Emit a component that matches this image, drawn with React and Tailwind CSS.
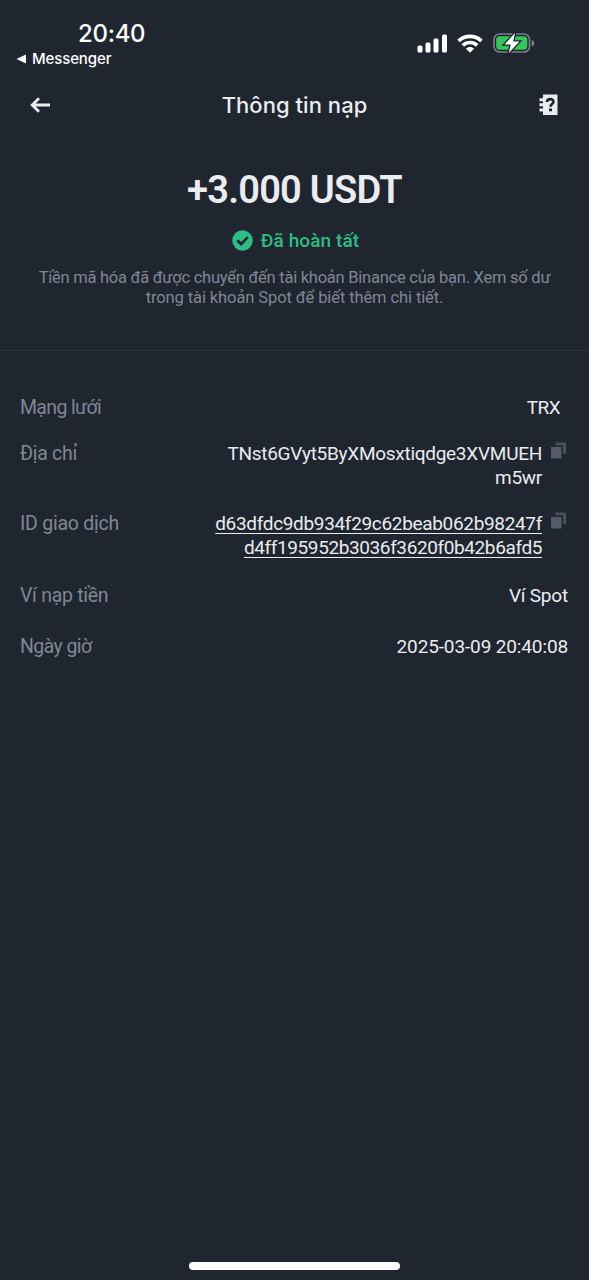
import React from "react";

const SignalIcon = () => (
  <svg width="30" height="19" viewBox="0 0 30 19" fill="#fff">
    <rect x="0.5" y="11.5" width="5" height="7" rx="1.5" />
    <rect x="8.5" y="8.5" width="5" height="10" rx="1.5" />
    <rect x="16.5" y="4.5" width="5" height="14" rx="1.5" />
    <rect x="25" y="0.5" width="5" height="18" rx="1.5" />
  </svg>
);

const WifiIcon = () => (
  <svg width="26" height="19" viewBox="0 0 26 19" fill="none" stroke="#fff" strokeWidth="3.7">
    <path d="M1.600 7C8 .9 18 .9 24.400 7" />
    <path d="M5.800 11.400c4.100-3.900 10.300-3.900 14.400 0" />
    <path d="M13 18.800 8.900 14.700c2.200-2.200 6-2.200 8.200 0z" fill="#fff" stroke="none" />
  </svg>
);

const BatteryIcon = () => (
  <svg width="42" height="22" viewBox="0 0 42 22">
    <rect x="1" y="2" width="35.500" height="18" rx="5.500" fill="none" stroke="#7b8087" strokeWidth="1.600" />
    <rect x="3.200" y="4.200" width="31.100" height="13.600" rx="3.600" fill="#32c759" />
    <path d="M38.700 8v6.500c1.900-.6 2.600-1.800 2.600-3.250S40.600 8.600 38.700 8z" fill="#7b8087" />
    <path d="M22 1 11.500 12.400h6.200L15.800 21 26.400 9.600h-6.200z" fill="#fff" stroke="#202630" strokeWidth="2.600" paintOrder="stroke" />
  </svg>
);

const BackIcon = () => (
  <svg width="22" height="16" viewBox="0 0 22 16" fill="none" stroke="#eaecef" strokeWidth="2.800">
    <path d="M20 8H2.500M9 1.200 2.200 8 9 14.800" />
  </svg>
);

const GuideIcon = () => (
  <svg width="19" height="22" viewBox="0 0 19 22">
    <path d="M4 0.500h14.500v20.500H4v-3.500H.5v-3H4v-2.200H.5v-3H4V7.200H.5v-3H4z" fill="#eaecef" />
    <path d="M8 8C8 6 9.300 5.100 11.200 5.100s3.200 1 3.200 2.700c0 2.300-2.900 2.200-2.900 5" fill="none" stroke="#202630" strokeWidth="2.600" />
    <rect x="10" y="14.500" width="3" height="2.800" fill="#202630" />
  </svg>
);

const CheckIcon = () => (
  <svg width="21" height="21" viewBox="0 0 21 21">
    <circle cx="10.500" cy="10.500" r="10.200" fill="#2ebd85" />
    <path d="m5.300 10.200 3.800 3.800 6.800-6.900" fill="none" stroke="#202630" strokeWidth="2.700" />
  </svg>
);

const CopyIcon = () => (
  <svg className="shrink-0" width="15" height="17" viewBox="0 0 15 17">
    <rect x="0" y="5" width="10.500" height="11.500" fill="#535b69" />
    <path d="M4.500.500H15v11.500h-2.800V3.300H4.500z" fill="#4a515b" />
  </svg>
);

const Label = ({ children, className }) => (
  <span className={`whitespace-nowrap text-[19.5px] text-[#7f8793] ${className}`}>{children}</span>
);

export default function App() {
  return (
    <div className="flex h-[1280px] w-full flex-col bg-[#202630] font-[Roboto,sans-serif] text-[#eaecef]">
      <div className="flex h-[76px] justify-between pl-4 pr-[54px] pt-[20px] font-[Inter,sans-serif] text-white">
        <div className="flex flex-col">
          <span className="pl-[62px] text-[24px] font-medium leading-7 tracking-[-0.3px]">20:40</span>
          <div className="flex h-[22px] items-center gap-[6px]">
            <svg width="10" height="10" viewBox="0 0 10 10" fill="#fff"><path d="M.500 5 10 .500v9z" /></svg>
            <span className="text-[15px] font-medium leading-5 tracking-[-0.12px]">Messenger</span>
          </div>
        </div>
        <div className="flex h-[46px] items-center gap-[10px]">
          <SignalIcon />
          <WifiIcon />
          <BatteryIcon />
        </div>
      </div>

      <header className="flex h-[57px] items-center justify-between pl-[30px] pr-[31px]">
        <BackIcon />
        <h1 className="pr-[2px] pt-px font-[Inter,sans-serif] text-[22px] font-medium tracking-[0.05px]">Thông tin nạp</h1>
        <GuideIcon />
      </header>

      <section className="flex h-[218px] flex-col items-center border-b border-[#2d343f] pt-[34px]">
        <div className="h-[46px] whitespace-nowrap text-[38px] font-semibold leading-[46px] tracking-[-0.75px]">+3.000 USDT</div>
        <div className="mt-[15px] flex h-6 items-center gap-2 pl-[2px] text-[#2ebd85]">
          <CheckIcon />
          <span className="pt-[2px] text-[19px] font-medium tracking-[0.08px]">Đã hoàn tất</span>
        </div>
        <p className="mt-[16px] whitespace-nowrap text-center text-[16.5px] leading-[20px] text-[#7f8793]">
          <span className="tracking-[-0.25px]">Tiền mã hóa đã được chuyển đến tài khoản Binance của bạn. Xem số dư</span>
          <br />
          <span className="tracking-[-0.1px]">trong tài khoản Spot để biết thêm chi tiết.</span>
        </p>
      </section>

      <section className="flex flex-col pl-5 pr-[21px] pt-[45px] text-[19px] leading-6">
        <div className="flex h-[46px] justify-between">
          <Label className="tracking-[-0.65px]">Mạng lưới</Label>
          <span className="pr-2 tracking-[-0.6px]">TRX</span>
        </div>
        <div className="flex h-[70px] justify-between">
          <Label className="tracking-[-0.3px]">Địa chỉ</Label>
          <div className="flex gap-[9px] pr-[2px]">
            <span className="whitespace-nowrap text-right tracking-[-0.28px]">TNst6GVyt5ByXMosxtiqdge3XVMUEH<br />m5wr</span>
            <CopyIcon />
          </div>
        </div>
        <div className="flex h-[72px] justify-between">
          <Label className="tracking-[-0.25px]">ID giao dịch</Label>
          <div className="flex gap-[9px] pr-[2px]">
            <span className="whitespace-nowrap text-right underline decoration-1 underline-offset-[3px]">
              <span className="tracking-[-0.33px]">d63dfdc9db934f29c62beab062b98247f</span>
              <br />
              <span className="tracking-[-0.39px]">d4ff195952b3036f3620f0b42b6afd5</span>
            </span>
            <CopyIcon />
          </div>
        </div>
        <div className="flex h-[51px] justify-between">
          <Label className="tracking-[-0.3px]">Ví nạp tiền</Label>
          <span className="tracking-[-0.2px]">Ví Spot</span>
        </div>
        <div className="flex h-6 justify-between">
          <Label className="tracking-[-0.6px]">Ngày giờ</Label>
          <span className="tracking-[-0.13px]">2025-03-09 20:40:08</span>
        </div>
      </section>

      <div className="mt-auto flex justify-center pb-[10px]">
        <div className="h-[8px] w-[211px] rounded-full bg-white" />
      </div>
    </div>
  );
}
